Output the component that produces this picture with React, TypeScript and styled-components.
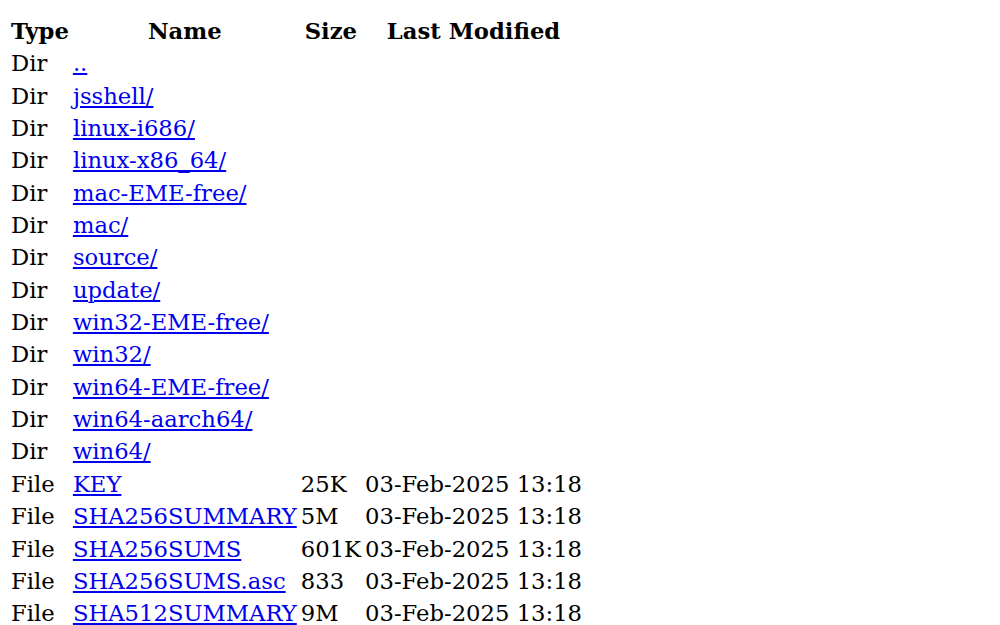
import styled, { createGlobalStyle } from 'styled-components';

const GlobalStyle = createGlobalStyle`
  body {
    margin: 14px 8px 8px;
    background: #ffffff;
    color: #000000;
    font-family: "DejaVu Serif", serif;
    font-size: 22.7px;
  }
`;

const Listing = styled.table`
  font-family: "DejaVu Serif", serif;
  font-size: 22.7px;
  line-height: 28.35px;
  border-collapse: separate;
  border-spacing: 2px;
`;

const HeadCell = styled.th`
  font-weight: bold;
  text-align: center;
  padding: 1px;
`;

const Cell = styled.td`
  padding: 1px;
  white-space: nowrap;
`;

const EntryLink = styled.a`
  color: #0000ee;
  text-decoration: underline;
`;

type Entry = {
  type: 'Dir' | 'File';
  name: string;
  size?: string;
  modified?: string;
};

const stamp = '03-Feb-2025 13:18';

const entries: Entry[] = [
  { type: 'Dir', name: '..' },
  { type: 'Dir', name: 'jsshell/' },
  { type: 'Dir', name: 'linux-i686/' },
  { type: 'Dir', name: 'linux-x86_64/' },
  { type: 'Dir', name: 'mac-EME-free/' },
  { type: 'Dir', name: 'mac/' },
  { type: 'Dir', name: 'source/' },
  { type: 'Dir', name: 'update/' },
  { type: 'Dir', name: 'win32-EME-free/' },
  { type: 'Dir', name: 'win32/' },
  { type: 'Dir', name: 'win64-EME-free/' },
  { type: 'Dir', name: 'win64-aarch64/' },
  { type: 'Dir', name: 'win64/' },
  { type: 'File', name: 'KEY', size: '25K', modified: stamp },
  { type: 'File', name: 'SHA256SUMMARY', size: '5M', modified: stamp },
  { type: 'File', name: 'SHA256SUMS', size: '601K', modified: stamp },
  { type: 'File', name: 'SHA256SUMS.asc', size: '833', modified: stamp },
  { type: 'File', name: 'SHA512SUMMARY', size: '9M', modified: stamp },
];

const App = () => {
  return (
    <>
      <GlobalStyle />
      <Listing>
        <thead>
          <tr>
            <HeadCell>Type</HeadCell>
            <HeadCell>Name</HeadCell>
            <HeadCell>Size</HeadCell>
            <HeadCell>Last Modified</HeadCell>
          </tr>
        </thead>
        <tbody>
          {entries.map((entry) => (
            <tr key={entry.name}>
              <Cell>{entry.type}</Cell>
              <Cell>
                <EntryLink href="#">{entry.name}</EntryLink>
              </Cell>
              <Cell>{entry.size}</Cell>
              <Cell>{entry.modified}</Cell>
            </tr>
          ))}
        </tbody>
      </Listing>
    </>
  );
};

export default App;
